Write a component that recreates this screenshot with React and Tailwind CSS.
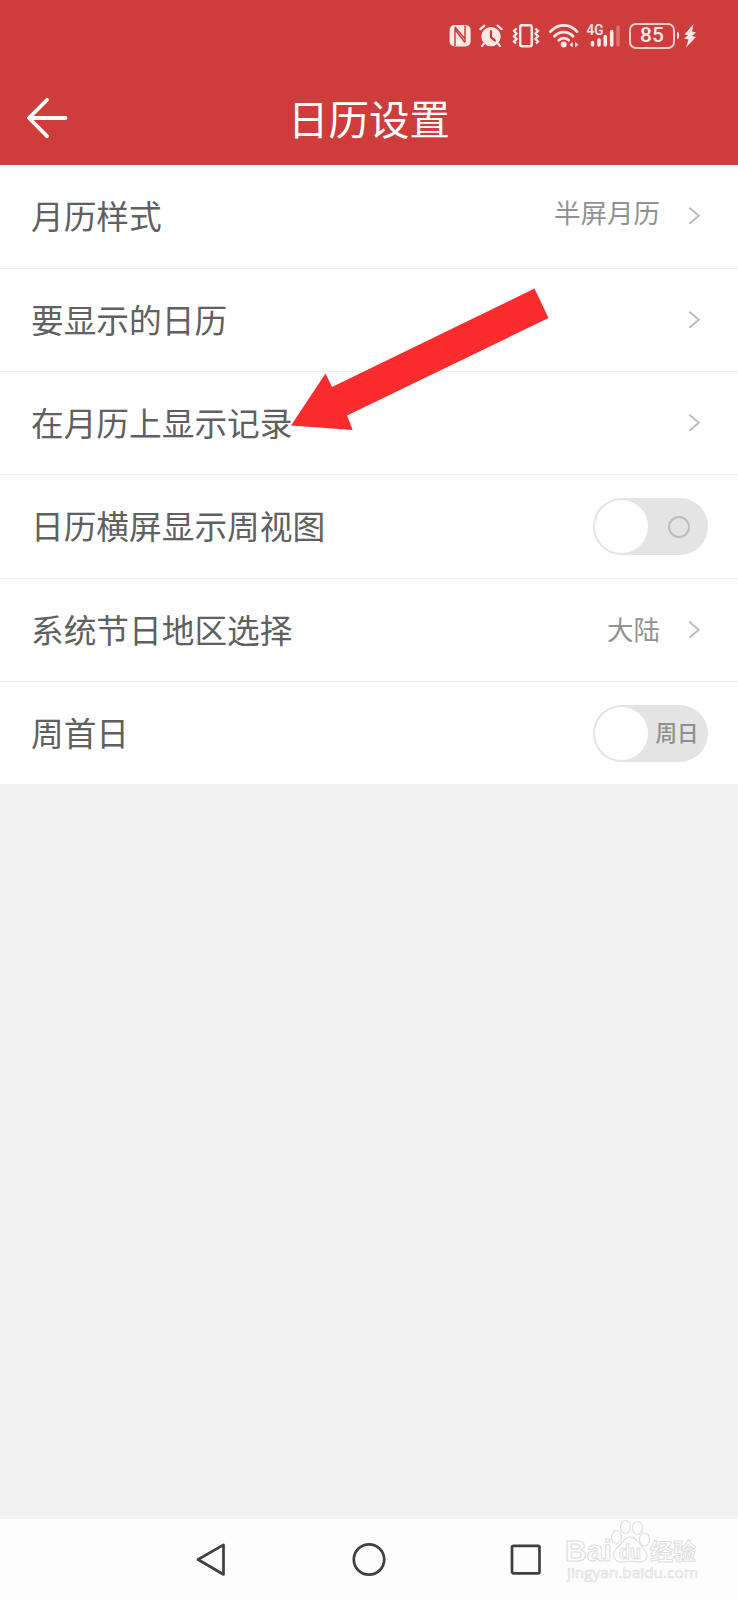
import { useState } from "react";

const STATUS_TINT = "#fde8e6";

const NfcIcon = () => (
    <svg className="ml-[449px] h-6 w-[22px] shrink-0" viewBox="0 0 22 24" fill="none">
        <rect x="0.6" y="1" width="21" height="21.500" rx="5" fill={STATUS_TINT} />
        <path d="M6 22V5.500L16 18.500M16 1.500v16.500M6 3l10 12" stroke="#ce3c3c" strokeWidth="1.500" />
    </svg>
);

const AlarmIcon = () => (
    <svg className="ml-2 h-6 w-6 shrink-0" viewBox="0 0 24 24" fill="none" strokeLinecap="round">
        <circle cx="12" cy="12.6" r="9.7" fill={STATUS_TINT} />
        <path d="M1.400 5.200 5.400 1.700M22.600 5.200l-4-3.500M4.600 20l-1.600 2M19.400 20l1.600 2" stroke={STATUS_TINT} strokeWidth="2.200" />
        <path d="M12 7v6.200l4 3.400" stroke="#ce3c3c" strokeWidth="2.200" />
    </svg>
);

const VibrateIcon = () => (
    <svg className="ml-[9px] h-6 w-7 shrink-0" viewBox="0 0 28 24" fill="none" stroke={STATUS_TINT}>
        <rect x="8.200" y="1.200" width="11.600" height="21" rx="2" strokeWidth="2.500" />
        <path d="M4.600 4.500 2 7.100l2.600 2.600L2 12.300l2.600 2.600L2 17.500l2 2M23.400 4.500 26 7.100l-2.600 2.600 2.600 2.600-2.600 2.600 2.600 2.600-2 2" strokeWidth="2.300" />
    </svg>
);

const WifiIcon = () => (
    <svg className="ml-[9px] h-6 w-[30px] shrink-0" viewBox="0 0 30 24" fill="none" stroke={STATUS_TINT} strokeLinecap="round">
        <path d="M1.500 7.600C9-.7 20.500-.7 28 7.600M5.500 12.200C10.500 6.700 19 6.700 24 12.200M9.800 16.300C12.500 13.400 17 13.400 19.700 16.300" strokeWidth="2.800" />
        <circle cx="14.700" cy="20.500" r="3" fill={STATUS_TINT} stroke="none" />
        <path d="m20.500 20.800 3.200-2.800v5.600zM29.500 20.800 26 18v5.600z" fill={STATUS_TINT} stroke="none" />
    </svg>
);

const SignalIcon = () => (
    <svg className="ml-[7px] h-8 w-[36px] shrink-0" viewBox="0 -4 36 32">
        <text x="0.500" y="10.500" fontSize="15" fontWeight="600" textLength="17" lengthAdjust="spacingAndGlyphs" fill={STATUS_TINT} fontFamily="Roboto, sans-serif">
            4G
        </text>
        <g stroke={STATUS_TINT} strokeWidth="3.600" strokeLinecap="round">
            <path d="M6.500 18.500v2.500M13 16v5M19.300 12.500v8.500M25.700 7.500v13.500" />
            <path d="M32 3v18" opacity="0.3" />
        </g>
    </svg>
);

const BatteryIcon = () => (
    <div className="ml-[7px] flex shrink-0 items-center">
        <div className="flex h-[26px] w-[46px] items-center justify-center rounded-[7px] border-2 border-[#f6cdca] font-[Roboto] text-[21px] font-medium leading-none text-[#fde8e6]">
            85
        </div>
        <div className="ml-[2px] h-[7px] w-[2px] rounded-r bg-[#fde8e6]" />
        <svg className="ml-[4px] h-[26px] w-[14px]" viewBox="0 0 14 26">
            <path d="M10.500 1 1.500 11.500l3.500.8L1 15.500l4.500 1L3 24.500 13 14l-4-1 4-3.500-4-1z" fill={STATUS_TINT} />
        </svg>
    </div>
);

const StatusBar = () => (
    <div className="flex h-[71px] items-center">
        <NfcIcon />
        <AlarmIcon />
        <VibrateIcon />
        <WifiIcon />
        <SignalIcon />
        <BatteryIcon />
    </div>
);

const Header = () => (
    <header className="h-[165px] bg-[#ce3c3c]">
        <StatusBar />
        <div className="flex h-[94px] items-center px-[27px]">
            <button className="w-[41px]" aria-label="返回">
                <svg className="h-[42px] w-[41px]" viewBox="0 0 41 42" fill="none" stroke="#fff" strokeWidth="3.8" strokeLinecap="round" strokeLinejoin="round">
                    <path d="M20 2.800 2 21l18 18.200M3 21h35.500" />
                </svg>
            </button>
            <h1 className="flex-1 pr-[41px] text-center text-[40.5px] leading-none text-white">日历设置</h1>
        </div>
    </header>
);

const Chevron = () => (
    <svg className="mb-px ml-[28px] mr-[6px] h-[18px] w-[14px]" viewBox="0 0 14 18" fill="none" stroke="#bdbdbd" strokeWidth="2">
        <path d="m1.300.700 9.500 8-9.500 8" />
    </svg>
);

/** Pill switch, `text` replaces the ring shown in the off state */
const Toggle = ({ text }) => {
    const [on, setOn] = useState(false);

    return (
        <button
            role="switch"
            aria-checked={on}
            onClick={() => setOn(!on)}
            className={`flex h-[57px] w-[115px] items-center rounded-full px-[2px] ${on ? "flex-row-reverse bg-[#ce3c3c]" : "bg-[#e4e4e4]"}`}
        >
            <span className="h-[53px] w-[53px] rounded-full bg-white" />
            <span className="flex flex-1 items-center justify-center pb-[2px] text-[21.5px] font-medium leading-none text-[#8e8e8e]">
                {text || <span className="ml-[3px] mt-[2px] h-[22px] w-[22px] rounded-full border-2 border-[#bdbdbd]" />}
            </span>
        </button>
    );
};

const rows = [
    { label: "月历样式", value: "半屏月历", height: "h-[104px]", valueClass: "pb-[8px]" },
    { label: "要显示的日历", height: "h-[103px]" },
    { label: "在月历上显示记录", height: "h-[103px]" },
    { label: "日历横屏显示周视图", toggle: true, height: "h-[104px]" },
    { label: "系统节日地区选择", value: "大陆", height: "h-[103px]", valueClass: "pb-[2px]" },
    { label: "周首日", toggle: true, toggleText: "周日", height: "h-[102px]" },
];

const SettingRow = ({ label, value, toggle, toggleText, height, valueClass = "" }) => (
    <li className={`flex items-center border-b border-[#ededed] pl-[31px] pr-[30px] last:border-b-0 ${height}`}>
        <span className="flex-1 pb-[2px] text-[32.7px] leading-none text-[#606060]">{label}</span>
        {value && <span className={`text-[26.5px] leading-none text-[#929292] ${valueClass}`}>{value}</span>}
        {toggle ? <Toggle text={toggleText} /> : <Chevron />}
    </li>
);

const PointerArrow = () => (
    <svg className="pointer-events-none absolute left-[290px] top-[287px] h-[145px] w-[260px]" viewBox="290 287 260 145">
        <path d="M534.500 288.500 548.500 318 347 415.500 352.700 430 291 425.500 325.500 373.500 332 387z" fill="#fc2b2e" />
    </svg>
);

const Watermark = () => (
    <svg className="pointer-events-none absolute right-[30px] top-[1516px] h-[70px] w-[146px]" viewBox="562 1516 146 70" fill="#fdfdfd" stroke="#dfdfdf" strokeWidth="1.200">
        <g fontFamily="Liberation Sans, Noto Sans CJK SC, sans-serif" fontWeight="700">
            <text x="565" y="1561" fontSize="30" textLength="47" lengthAdjust="spacingAndGlyphs">Bai</text>
            <ellipse cx="616.500" cy="1537" rx="5" ry="6.500" />
            <ellipse cx="625.500" cy="1527" rx="5" ry="6.500" />
            <ellipse cx="637.500" cy="1528" rx="5" ry="6.500" />
            <ellipse cx="644.500" cy="1539.500" rx="5" ry="6.500" />
            <path d="M630 1537c5 0 7.500 4 10.500 8s6.500 6 6.500 10.500-4 7-8.500 6.500-5-.7-8.500-.7-6 1-9.500.7-7-3-7-7.500 4-6.500 7-10 4.500-7.500 9.500-7.500z" />
            <text x="619" y="1559" fontSize="20" textLength="22" lengthAdjust="spacingAndGlyphs" strokeWidth="1">du</text>
            <text x="650" y="1560" fontSize="23" textLength="46" lengthAdjust="spacingAndGlyphs" strokeWidth="1">经验</text>
            <text x="567" y="1578" fontSize="15" fontWeight="400" fontFamily="Open Sans, sans-serif" textLength="131" lengthAdjust="spacingAndGlyphs" strokeWidth="0.700">jingyan.baidu.com</text>
        </g>
    </svg>
);

const NavBar = () => (
    <nav className="flex h-[81px] justify-between bg-[#fdfdfd] pl-[195px] pr-[196px] pt-[23px]">
        <svg className="h-9 w-8" viewBox="0 0 32 36" fill="none" stroke="#404040" strokeWidth="2.700" strokeLinejoin="round">
            <path d="M3 17.500 28.500 2.800v29.700z" />
        </svg>
        <svg className="h-9 w-9" viewBox="0 0 36 36" fill="none" stroke="#404040" strokeWidth="2.700">
            <circle cx="18" cy="17.500" r="15.200" />
        </svg>
        <svg className="h-9 w-8" viewBox="0 0 32 36" fill="none" stroke="#404040" strokeWidth="2.700">
            <rect x="2" y="3.800" width="27.500" height="27.500" rx="1.500" />
        </svg>
    </nav>
);

export default function App() {
    return (
        <div className="relative flex h-[1600px] w-[738px] flex-col overflow-hidden bg-[#f2f2f2] font-['Noto_Sans_CJK_SC',sans-serif]">
            <Header />
            <main className="flex-1">
                <ul className="bg-white">
                    {rows.map((row) => (
                        <SettingRow key={row.label} {...row} />
                    ))}
                </ul>
            </main>
            <NavBar />
            <PointerArrow />
            <Watermark />
        </div>
    );
}
